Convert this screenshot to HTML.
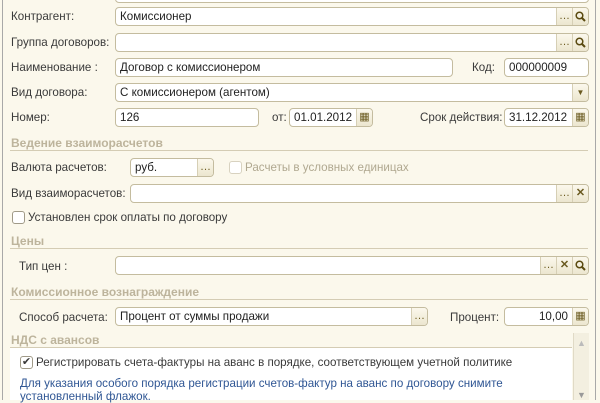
<!DOCTYPE html>
<html><head><meta charset="utf-8"><style>
*{box-sizing:border-box;margin:0;padding:0}
body{width:600px;height:400px;overflow:hidden;background:#fbf8ec;font-family:"Liberation Sans",sans-serif;font-size:11.6px;color:#3a3a3a;position:relative}
.a{position:absolute;white-space:nowrap}
.f{position:absolute;background:#fff;border:1px solid #c4bc9f;border-radius:4px;height:19px;line-height:17px;padding-left:4px;color:#222;overflow:hidden}
.b{position:absolute;top:0;width:16px;height:17px;background:linear-gradient(#fbf8ec,#ece6cf);border-left:1px solid #d6cfb5;text-align:center;color:#6a5a20;font-size:11px;line-height:17px}
.b svg{display:block;margin:3px auto 0}
.h{position:absolute;font-weight:bold;color:#bdb49c;font-size:12px}
.l{position:absolute;height:1px;background:#d4ccb4}
.cb{position:absolute;width:13px;height:13px;border:1px solid #a09a88;border-radius:3px;background:#fff}
</style></head><body>
<div class="a" style="left:2px;top:0;width:1px;height:400px;background:#a8a8a8"></div>
<div class="a" style="left:595px;top:0;width:1px;height:400px;background:#a8a8a8"></div>
<div class="f" style="left:115px;top:-14px;width:474px;height:17px"></div>

<div class="a" style="left:11px;top:10px">Контрагент:</div>
<div class="f" style="left:115px;top:7px;width:474px">Комиссионер<div class="b" style="right:16px">…</div><div class="b" style="right:0"><svg width="11" height="11"><circle cx="4.5" cy="4.5" r="3.3" fill="none" stroke="#5a4a10" stroke-width="1.5"/><path d="M7 7L10 10" stroke="#5a4a10" stroke-width="2"/></svg></div></div>
<div class="a" style="left:11px;top:36px">Группа договоров:</div>
<div class="f" style="left:115px;top:33px;width:474px"><div class="b" style="right:16px">…</div><div class="b" style="right:0"><svg width="11" height="11"><circle cx="4.5" cy="4.5" r="3.3" fill="none" stroke="#5a4a10" stroke-width="1.5"/><path d="M7 7L10 10" stroke="#5a4a10" stroke-width="2"/></svg></div></div>
<div class="a" style="left:11px;top:61px">Наименование :</div>
<div class="f" style="left:115px;top:58px;width:338px">Договор с комиссионером</div>
<div class="a" style="left:472px;top:61px">Код:</div>
<div class="f" style="left:504px;top:58px;width:85px">000000009</div>
<div class="a" style="left:11px;top:86px">Вид договора:</div>
<div class="f" style="left:115px;top:83px;width:474px">С комиссионером (агентом)<div class="b" style="right:0;font-size:8px">&#9660;</div></div>
<div class="a" style="left:11px;top:111px">Номер:</div>
<div class="f" style="left:115px;top:108px;width:144px">126</div>
<div class="a" style="left:272px;top:111px">от:</div>
<div class="f" style="left:289px;top:108px;width:84px">01.01.2012<div class="b" style="right:0">&#9638;</div></div>
<div class="a" style="left:420px;top:111px">Срок действия:</div>
<div class="f" style="left:504px;top:108px;width:85px">31.12.2012<div class="b" style="right:0">&#9638;</div></div>

<div class="h" style="left:11px;top:136px">Ведение взаиморасчетов</div>
<div class="l" style="left:10px;top:150px;width:578px"></div>
<div class="a" style="left:11px;top:161px">Валюта расчетов:</div>
<div class="f" style="left:130px;top:158px;width:84px">руб.<div class="b" style="right:0">…</div></div>
<div class="cb" style="left:229px;top:161px;border-color:#d8d2c0"></div>
<div class="a" style="left:245px;top:161px;color:#b0a890">Расчеты в условных единицах</div>
<div class="a" style="left:11px;top:187px">Вид взаиморасчетов:</div>
<div class="f" style="left:130px;top:184px;width:459px"><div class="b" style="right:16px">…</div><div class="b" style="right:0;font-weight:bold">✕</div></div>
<div class="cb" style="left:12px;top:211px"></div>
<div class="a" style="left:28px;top:211px">Установлен срок оплаты по договору</div>

<div class="h" style="left:11px;top:234px">Цены</div>
<div class="l" style="left:10px;top:248px;width:578px"></div>
<div class="a" style="left:19px;top:260px">Тип цен :</div>
<div class="f" style="left:115px;top:256px;width:474px"><div class="b" style="right:32px">…</div><div class="b" style="right:16px;font-weight:bold">✕</div><div class="b" style="right:0"><svg width="11" height="11"><circle cx="4.5" cy="4.5" r="3.3" fill="none" stroke="#5a4a10" stroke-width="1.5"/><path d="M7 7L10 10" stroke="#5a4a10" stroke-width="2"/></svg></div></div>

<div class="h" style="left:11px;top:285px">Комиссионное вознаграждение</div>
<div class="l" style="left:10px;top:299px;width:578px"></div>
<div class="a" style="left:19px;top:311px">Способ расчета:</div>
<div class="f" style="left:115px;top:307px;width:313px">Процент от суммы продажи<div class="b" style="right:0">…</div></div>
<div class="a" style="left:450px;top:311px">Процент:</div>
<div class="f" style="left:504px;top:307px;width:85px;text-align:right;padding-right:20px">10,00<div class="b" style="right:0">&#9638;</div></div>

<div class="h" style="left:11px;top:333px">НДС с авансов</div>
<div class="l" style="left:10px;top:347px;width:562px"></div>
<div class="a" style="left:573px;top:333px;width:16px;height:67px;background:#f3efe0;border-left:1px solid #e0dac6"></div>
<div class="a" style="left:577px;top:338px;color:#bbb;font-size:9px">▲</div>
<div class="a" style="left:577px;top:390px;color:#999;font-size:9px">▼</div>
<div class="a" style="left:10px;top:348px;width:562px;height:52px;background:#fff"></div>
<div class="cb" style="left:20px;top:356px;font-size:11px;line-height:11px;text-align:center">✔</div>
<div class="a" style="left:36px;top:356px">Регистрировать счета-фактуры на аванс в порядке, соответствующем учетной политике</div>
<div class="a" style="left:20px;top:377px;color:#2f5694">Для указания особого порядка регистрации счетов-фактур на аванс по договору снимите</div>
<div class="a" style="left:20px;top:390px;color:#2f5694">установленный флажок.</div>
</body></html>
